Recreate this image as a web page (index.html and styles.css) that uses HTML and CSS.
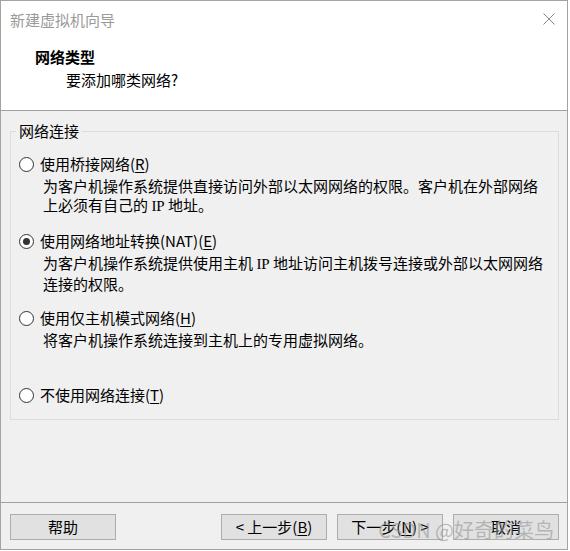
FILE: index.html
```html
<!DOCTYPE html>
<html lang="zh-CN">
<head>
<meta charset="utf-8">
<title>新建虚拟机向导</title>
<link rel="stylesheet" href="styles.css">
</head>
<body>
<div class="window">
  <div class="titlebar">
    <span class="title">新建虚拟机向导</span>
    <svg class="close" width="12" height="12" viewBox="0 0 12 12"><path d="M0.5 0.5 L11.5 11.5 M11.5 0.5 L0.5 11.5" stroke="#8a8a8a" stroke-width="1" fill="none"/></svg>
  </div>
  <div class="header">
    <div class="heading">网络类型</div>
    <div class="subheading">要添加哪类网络?</div>
  </div>
  <div class="content">
    <fieldset class="group">
      <legend class="legend">网络连接</legend>
      <div class="option">
        <div class="row"><span class="radio"></span><span>使用桥接网络(<u>R</u>)</span></div>
        <div class="desc">为客户机操作系统提供直接访问外部以太网网络的权限。客户机在外部网络<br>上必须有自己的 <span class="latin">IP</span> 地址。</div>
      </div>
      <div class="option">
        <div class="row"><span class="radio checked"></span><span>使用网络地址转换(NAT)(<u>E</u>)</span></div>
        <div class="desc">为客户机操作系统提供使用主机 <span class="latin">IP</span> 地址访问主机拨号连接或外部以太网网络<br>连接的权限。</div>
      </div>
      <div class="option">
        <div class="row"><span class="radio"></span><span>使用仅主机模式网络(<u>H</u>)</span></div>
        <div class="desc">将客户机操作系统连接到主机上的专用虚拟网络。</div>
      </div>
      <div class="option">
        <div class="row"><span class="radio"></span><span>不使用网络连接(<u>T</u>)</span></div>
      </div>
    </fieldset>
  </div>
  <div class="footer">
    <button class="btn help">帮助</button>
    <button class="btn">&lt; 上一步(<u>B</u>)</button>
    <button class="btn">下一步(<u>N</u>) &gt;</button>
    <button class="btn">取消</button>
    <div class="watermark">CSDN @好奇的菜鸟</div>
  </div>
</div>
</body>
</html>
```

FILE: styles.css
```css
* { box-sizing: border-box; }
html, body {
  margin: 0;
  padding: 0;
  background: #ffffff;
}
body {
  font-family: "Noto Sans CJK SC", "Noto Sans", sans-serif;
  font-size: 15px;
  color: #000;
}
.window {
  position: relative;
  width: 568px;
  height: 550px;
  border: 1px solid #a3a3a3;
  background: #f0f0f0;
  display: flex;
  flex-direction: column;
}
.titlebar {
  height: 38px;
  background: #fff;
  display: flex;
  justify-content: space-between;
  align-items: flex-start;
  padding: 9px 12px 0 9px;
}
.title {
  line-height: 20px;
  color: #9a9a9a;
}
.close {
  margin-top: 3px;
  display: block;
}
.header {
  background: #fff;
  padding: 8px 0 20px 34px;
  border-bottom: 1px solid #a0a0a0;
}
.heading {
  font-weight: 700;
  line-height: 20px;
}
.subheading {
  line-height: 20px;
  margin-top: 3px;
  padding-left: 31px;
}
.content {
  flex: 1;
  padding: 10px 8px 0 9px;
}
.group {
  margin: 0;
  border: 1px solid #dcdcdc;
  padding: 13px 8px 14px 5px;
}
.legend {
  padding: 0 3px;
  line-height: 20px;
}
.option {
  height: 77px;
}
.option:last-child {
  height: auto;
}
.row {
  display: flex;
  align-items: center;
  height: 20px;
  line-height: 20px;
  white-space: nowrap;
}
.radio {
  width: 15px;
  height: 15px;
  border: 1px solid #333;
  border-radius: 50%;
  background: #fff;
  margin-left: 3px;
  margin-right: 6px;
  display: flex;
  align-items: center;
  justify-content: center;
  flex: none;
}
.radio.checked::after {
  content: "";
  width: 7px;
  height: 7px;
  border-radius: 50%;
  background: #333;
}
.desc {
  margin-top: 2px;
  padding-left: 27px;
  line-height: 19px;
  white-space: nowrap;
}
.latin {
  font-family: "Liberation Serif", "Noto Sans CJK SC", serif;
}
u {
  text-decoration: underline;
  text-underline-offset: 2px;
}
.footer {
  position: relative;
  border-top: 1px solid #a0a0a0;
  padding: 11px 8px 9px 9px;
  display: flex;
  gap: 10px;
}
.btn {
  width: 106px;
  height: 26px;
  border: 1px solid #adadad;
  background: #e1e1e1;
  font-family: "Noto Sans CJK SC", "Noto Sans", sans-serif;
  font-size: 15px;
  line-height: 22px;
  color: #000;
  padding: 0;
  margin: 0;
}
.help {
  margin-right: auto;
}
.watermark {
  position: absolute;
  right: 13px;
  top: 14px;
  font-size: 20px;
  line-height: 26px;
  color: rgba(150, 150, 150, 0.6);
  pointer-events: none;
  white-space: nowrap;
}
```
